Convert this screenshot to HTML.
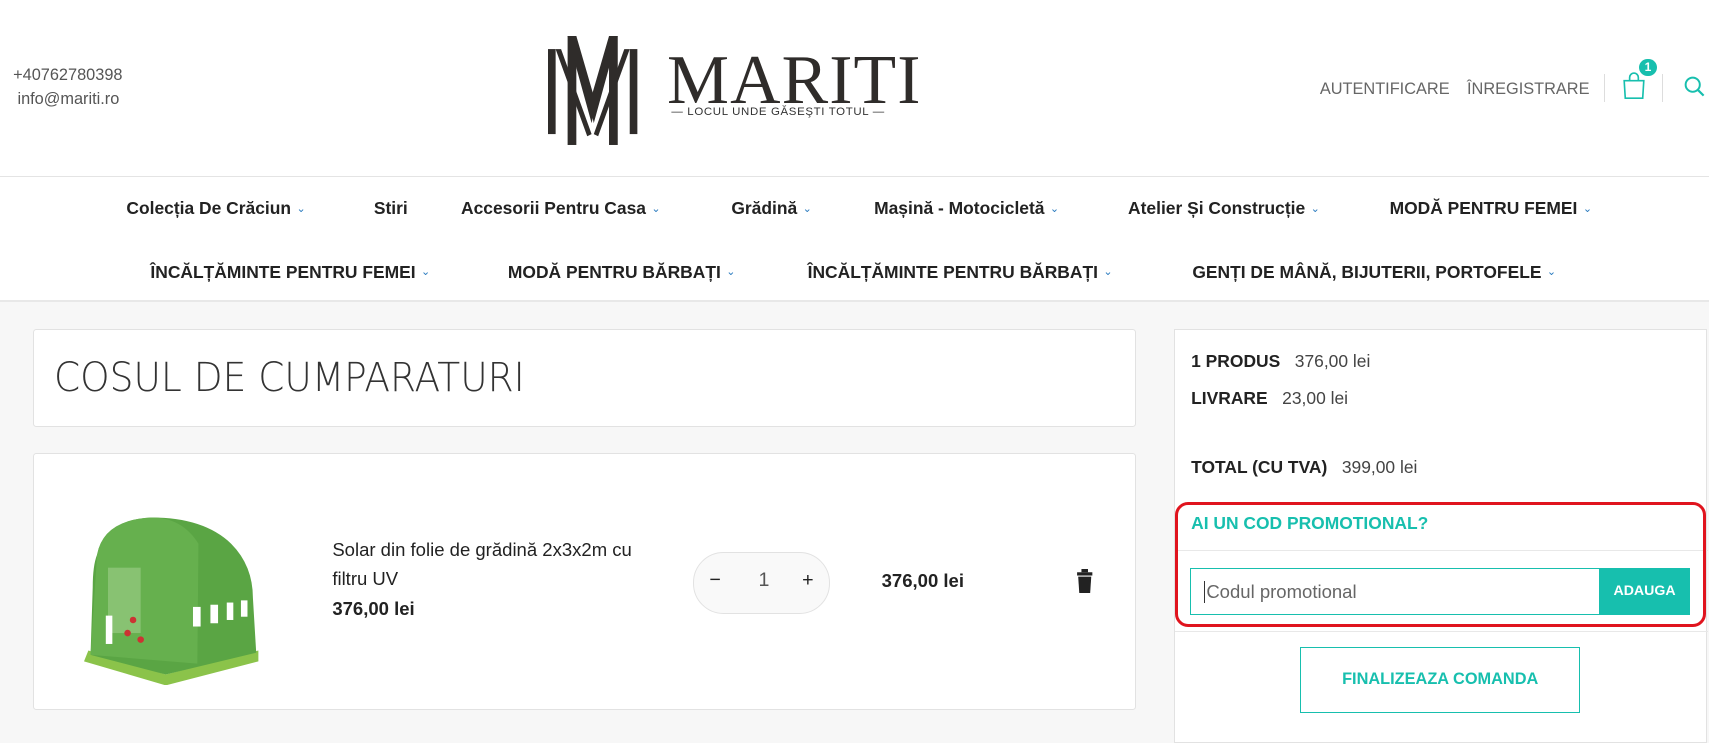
<!DOCTYPE html>
<html><head><meta charset="utf-8"><style>
html{zoom:1.0899}
*{box-sizing:border-box;margin:0;padding:0}
body{width:1568px;height:667px;overflow:hidden;background:#f7f7f7;font-family:"Liberation Sans",Arial,sans-serif;color:#222;position:relative}
.a{position:absolute;white-space:nowrap}
header{position:absolute;left:0;top:0;width:1568px;height:162px;background:#fff;border-bottom:1px solid #e4e4e4}
nav{position:absolute;left:0;top:162px;width:1568px;height:115px;background:#fff;border-bottom:2px solid #e8e8e8}
nav .a{font-weight:bold;font-size:16px;color:#222}
nav .a i{font-style:normal;color:#2a7bbf;font-size:10px;font-weight:normal;margin-left:5px;position:relative;top:-2px}
.card{position:absolute;background:#fff;border:1px solid #e2e2e2;border-radius:3px}
.teal{color:#17bfae}
</style></head><body>
<header>
<div class="a" style="left:12px;top:61px;font-size:15px;color:#555">+40762780398</div>
<div class="a" style="left:16px;top:83px;font-size:15px;color:#555">info@mariti.ro</div>
<svg class="a" style="left:503px;top:33px" width="82" height="100" viewBox="0 0 82 100">
<g fill="#2f2c2a">
<rect x="0" y="12" width="7" height="78"/><rect x="18" y="0" width="8" height="100"/>
<rect x="56" y="0" width="8" height="100"/><rect x="75" y="12" width="7" height="78"/>
<polygon points="18,0 26,0 44,62 40,80"/><polygon points="64,0 56,0 38,62 42,80"/>
<polygon points="7,12 12,12 40,90 36,92"/><polygon points="75,12 70,12 42,90 46,92"/>
</g></svg>
<div class="a" style="left:612px;top:38px;font-family:'Liberation Serif',serif;font-size:64px;color:#2f2c2a;letter-spacing:1px">MARITI</div>
<div class="a" style="left:616px;top:97px;font-size:10.5px;color:#333;letter-spacing:0.6px">— LOCUL UNDE GĂSEŞTI TOTUL —</div>
<div class="a" style="left:1211px;top:73px;font-size:15px;color:#666">AUTENTIFICARE</div>
<div class="a" style="left:1346px;top:73px;font-size:15px;color:#666">ÎNREGISTRARE</div>
<div class="a" style="left:1472px;top:68px;width:1px;height:26px;background:#ddd"></div>
<div class="a" style="left:1525px;top:68px;width:1px;height:26px;background:#ddd"></div>
<svg class="a" style="left:1488px;top:66px" width="22" height="26" viewBox="0 0 22 26"><path d="M2 8h18l-1 16H3z M7 8V5a4 4 0 0 1 8 0v3" fill="none" stroke="#17bfae" stroke-width="1.5"/></svg>
<div class="a" style="left:1504px;top:54px;width:16px;height:16px;border-radius:50%;background:#17bfae;color:#fff;font-size:11px;font-weight:bold;text-align:center;line-height:16px">1</div>
<svg class="a" style="left:1545px;top:70px" width="20" height="20" viewBox="0 0 20 20"><circle cx="8" cy="8" r="6.5" fill="none" stroke="#17bfae" stroke-width="1.8"/><path d="M13 13l5 5" stroke="#17bfae" stroke-width="2"/></svg>
</header>
<nav>
<div class="a" style="left:116px;top:20px">Colecția De Crăciun<i>⌄</i></div>
<div class="a" style="left:343px;top:20px">Stiri</div>
<div class="a" style="left:423px;top:20px">Accesorii Pentru Casa<i>⌄</i></div>
<div class="a" style="left:671px;top:20px">Grădină<i>⌄</i></div>
<div class="a" style="left:802px;top:20px">Mașină - Motocicletă<i>⌄</i></div>
<div class="a" style="left:1035px;top:20px">Atelier Și Construcție<i>⌄</i></div>
<div class="a" style="left:1275px;top:20px">MODĂ PENTRU FEMEI<i>⌄</i></div>
<div class="a" style="left:138px;top:78px">ÎNCĂLȚĂMINTE PENTRU FEMEI<i>⌄</i></div>
<div class="a" style="left:466px;top:78px">MODĂ PENTRU BĂRBAȚI<i>⌄</i></div>
<div class="a" style="left:741px;top:78px">ÎNCĂLȚĂMINTE PENTRU BĂRBAȚI<i>⌄</i></div>
<div class="a" style="left:1094px;top:78px">GENȚI DE MÂNĂ, BIJUTERII, PORTOFELE<i>⌄</i></div>
</nav>
<div class="card" style="left:30px;top:302px;width:1012px;height:90px">
<div class="a" style="left:19px;top:22px;font-size:37px;color:#333;font-family:'DejaVu Sans','Liberation Sans',sans-serif;font-weight:200;transform:scaleX(0.93);transform-origin:left">COSUL DE CUMPARATURI</div>
</div>
<div class="card" style="left:30px;top:416px;width:1012px;height:235px">
<svg class="a" style="left:46px;top:52px" width="170" height="160" viewBox="0 0 170 160">
<path d="M4 128 L75 150 L160 128 L160 138 L75 160 L0 138Z" fill="#8bc34a"/>
<path d="M12 40 Q18 8 62 6 Q110 6 135 30 Q155 50 155 80 L158 130 L75 150 L6 132 L8 70 Q8 50 12 40Z" fill="#5aa544"/>
<path d="M12 40 Q18 8 62 6 Q90 6 105 30 L104 140 L6 132Z" fill="#66b04e"/>
<rect x="22" y="52" width="30" height="60" fill="#9fcf8a" opacity=".6"/>
<rect x="20" y="96" width="6" height="26" fill="#fff"/><rect x="100" y="88" width="7" height="18" fill="#fff"/><rect x="116" y="86" width="7" height="17" fill="#fff"/><rect x="131" y="84" width="6" height="16" fill="#fff"/><rect x="144" y="82" width="6" height="15" fill="#fff"/>
<circle cx="45" cy="100" r="3" fill="#c33"/><circle cx="40" cy="112" r="3" fill="#c33"/><circle cx="52" cy="118" r="3" fill="#c33"/>
</svg>
<div class="a" style="left:274px;top:74px;font-size:17px;color:#222;line-height:27px;white-space:normal;width:310px">Solar din folie de grădină 2x3x2m cu filtru UV</div>
<div class="a" style="left:274px;top:132px;font-size:17px;font-weight:bold">376,00 lei</div>
<div class="a" style="left:605px;top:90px;width:126px;height:56px;border:1px solid #e2e2e2;border-radius:28px;background:#f9f9f9"></div>
<div class="a" style="left:620px;top:105px;font-size:18px">−</div>
<div class="a" style="left:665px;top:105px;font-size:18px;color:#555">1</div>
<div class="a" style="left:705px;top:105px;font-size:18px">+</div>
<div class="a" style="left:778px;top:106px;font-size:17px;font-weight:bold">376,00 lei</div>
<svg class="a" style="left:956px;top:105px" width="16" height="22" viewBox="0 0 16 22"><rect x="1" y="3" width="14" height="3" fill="#222"/><rect x="5" y="0" width="6" height="3" fill="#222"/><path d="M2 7h12l-1 15H3z" fill="#222"/></svg>
</div>
<div class="a" style="left:1077px;top:302px;width:489px;height:380px;background:#fff;border:1px solid #e2e2e2">
<div class="a" style="left:15px;top:19px;font-size:16px"><b>1 PRODUS</b>&nbsp;&nbsp; <span style="color:#444">376,00 lei</span></div>
<div class="a" style="left:15px;top:53px;font-size:16px"><b>LIVRARE</b>&nbsp;&nbsp; <span style="color:#444">23,00 lei</span></div>
<div class="a" style="left:15px;top:116px;font-size:16px"><b>TOTAL (CU TVA)</b>&nbsp;&nbsp; <span style="color:#444">399,00 lei</span></div>
<div class="a teal" style="left:15px;top:168px;font-size:16px;font-weight:bold">AI UN COD PROMOTIONAL?</div>
<div class="a" style="left:0;top:202px;width:489px;height:1px;background:#e8e8e8"></div>
<div class="a" style="left:14px;top:218px;width:376px;height:43px;border:1px solid #17bfae;background:#fff"></div>
<div class="a" style="left:27px;top:230px;font-size:17px;color:#666;border-left:1px solid #333;padding-left:1px">Codul promotional</div>
<div class="a" style="left:389px;top:218px;width:84px;height:43px;background:#17bfae;color:#fff;font-size:13px;font-weight:bold;text-align:center;line-height:43px">ADAUGA</div>
<div class="a" style="left:0;top:158px;width:487px;height:114px;border:3px solid #e0141e;border-radius:12px"></div>
<div class="a" style="left:0;top:276px;width:489px;height:1px;background:#e8e8e8"></div>
<div class="a teal" style="left:115px;top:291px;width:257px;height:60px;border:1px solid #17bfae;font-size:15px;font-weight:bold;text-align:center;line-height:58px">FINALIZEAZA COMANDA</div>
</div>
</body></html>
